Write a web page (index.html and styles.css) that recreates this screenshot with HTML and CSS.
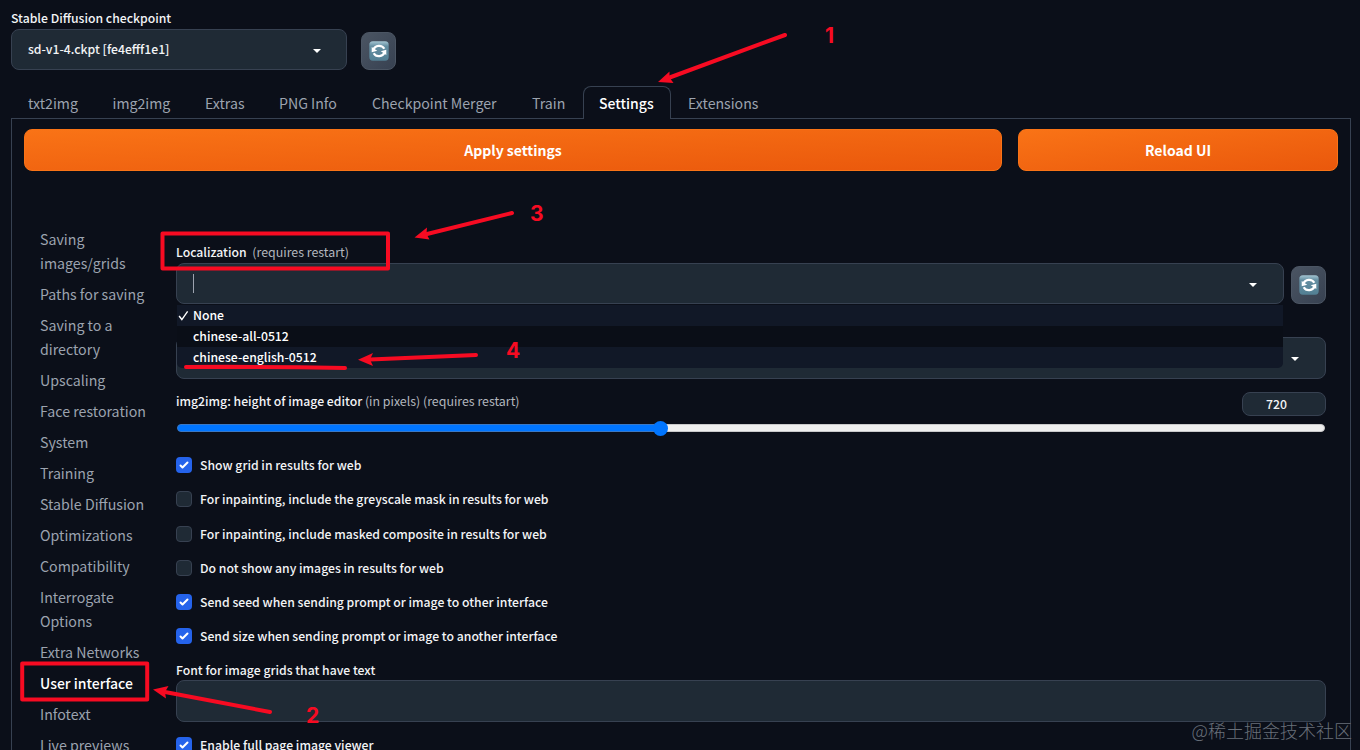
FILE: index.html
```html
<!DOCTYPE html>
<html lang="en">
<head>
<meta charset="utf-8">
<title>Stable Diffusion</title>
<link rel="stylesheet" href="styles.css">
</head>
<body>
<svg class="defs" width="0" height="0" aria-hidden="true">
  <defs>
    <linearGradient id="tile" x1="0" y1="0" x2="0" y2="1"><stop offset="0" stop-color="#a4c5d2"/><stop offset=".25" stop-color="#658fa2"/><stop offset="1" stop-color="#527f93"/></linearGradient>
    <symbol id="refresh" viewBox="0 0 20 20">
      <rect x=".3" y=".3" width="19.4" height="19.4" rx="3.6" fill="url(#tile)"/>
      <path d="M4.400 8.800A5.900 5.500 0 0 1 15.300 7.800M15.600 11.200A5.900 5.500 0 0 1 4.700 12.200" fill="none" stroke="#fff" stroke-width="2.200"/>
      <path d="M2.700 6V11.200L8.200 9.700ZM17.300 14V8.800L11.800 10.300Z" fill="#fff"/>
    </symbol>
    <symbol id="caret" viewBox="0 0 18 18"><path d="M5 8l4 4 4-4z" fill="#fff"/></symbol>
    <symbol id="check" viewBox="0 0 16 16"><path d="M12.207 4.793a1 1 0 0 1 0 1.414l-5 5a1 1 0 0 1-1.414 0l-2-2a1 1 0 0 1 1.414-1.414L6.5 9.086l4.293-4.293a1 1 0 0 1 1.414 0z" fill="#fff"/></symbol>
  </defs>
</svg>
<div class="app">
  <header class="quick">
    <div class="quick-field">
      <div class="label">Stable Diffusion checkpoint</div>
      <div class="select"><span class="value">sd-v1-4.ckpt [fe4efff1e1]</span><svg class="caret"><use href="#caret"/></svg></div>
    </div>
    <button class="tool"><svg><use href="#refresh"/></svg></button>
  </header>
  <nav class="tabs">
    <span class="tab t1">txt2img</span><span class="tab t2">img2img</span><span class="tab t3">Extras</span><span class="tab t4">PNG Info</span><span class="tab t5">Checkpoint Merger</span><span class="tab t6">Train</span><span class="tab t7 active">Settings</span><span class="tab t8">Extensions</span>
  </nav>
  <main class="panel">
    <div class="actions"><button class="primary apply">Apply settings</button><button class="primary reload">Reload UI</button></div>
    <div class="columns">
      <aside class="side">
        <div>Saving<br>images/grids</div><div>Paths for saving</div><div>Saving to a<br>directory</div><div>Upscaling</div><div>Face restoration</div><div>System</div><div>Training</div><div>Stable Diffusion</div><div>Optimizations</div><div>Compatibility</div><div>Interrogate<br>Options</div><div>Extra Networks</div><div class="current">User interface</div><div>Infotext</div><div>Live previews</div>
      </aside>
      <section class="form">
        <div class="label loc">Localization <span class="hint">(requires restart)</span></div>
        <div class="loc-row">
          <div class="select open"><span class="cursor"></span><svg class="caret"><use href="#caret"/></svg>
            <div class="menu">
              <div class="option"><svg class="tick" viewBox="0 0 12 12"><path d="M1.2 6.6L4.2 10.4L10.5 1.5" fill="none" stroke="#fff" stroke-width="1.5"/></svg>None</div>
              <div class="option alt">chinese-all-0512</div>
              <div class="option">chinese-english-0512</div>
            </div>
          </div>
          <button class="tool"><svg><use href="#refresh"/></svg></button>
        </div>
        <div class="select second"><svg class="caret"><use href="#caret"/></svg></div>
        <div class="range-head"><div class="label range-label">img2img: height of image editor <span class="hint">(in pixels) (requires restart)</span></div><div class="number">720</div></div>
        <div class="slider"><div class="fill"></div><div class="thumb"></div><div class="rest"></div></div>
        <div class="checks">
          <div class="check"><i class="box on"><svg><use href="#check"/></svg></i><span>Show grid in results for web</span></div>
          <div class="check"><i class="box"></i><span>For inpainting, include the greyscale mask in results for web</span></div>
          <div class="check"><i class="box"></i><span>For inpainting, include masked composite in results for web</span></div>
          <div class="check"><i class="box"></i><span>Do not show any images in results for web</span></div>
          <div class="check"><i class="box on"><svg><use href="#check"/></svg></i><span>Send seed when sending prompt or image to other interface</span></div>
          <div class="check"><i class="box on"><svg><use href="#check"/></svg></i><span>Send size when sending prompt or image to another interface</span></div>
        </div>
        <div class="label fontlabel">Font for image grids that have text</div>
        <div class="textbox"></div>
        <div class="check last"><i class="box on"><svg><use href="#check"/></svg></i><span>Enable full page image viewer</span></div>
      </section>
    </div>
  </main>
</div>
<svg class="marks" viewBox="0 0 1360 750">
  <g fill="none" stroke="#f70b22" stroke-width="4" stroke-linecap="round" stroke-linejoin="round">
    <path d="M785 35L667 78.500M512 213L425 234.500M476 355L370 359.500M270 712L165 692"/>
    <path d="M186 367Q265 366.500 345 368"/>
    <rect x="162.500" y="233.500" width="225.500" height="35"/>
    <rect x="22.200" y="663.500" width="125" height="36"/>
  </g>
  <g fill="#f70b22">
    <path d="M658 82L669.500 71.500L669.500 77.500L673.500 83Z"/>
    <path d="M414.500 237.500L427 227.500L426.500 234L429.500 239.500Z"/>
    <path d="M358 359.700L373 353L370 359.500L373 366Z"/>
    <path d="M153 689.500L168.500 686L165 692L166 698.500Z"/>
  </g>
  <g class="nums"><text x="825" y="43">1</text><text x="306" y="723">2</text><text x="530" y="221">3</text><text x="506" y="358">4</text></g>
</svg>
<div class="watermark">@稀土掘金技术社区</div>
</body>
</html>
```
FILE: styles.css
```css
* { box-sizing: border-box; }
body {
  margin: 0;
  width: 1360px;
  height: 750px;
  overflow: hidden;
  position: relative;
  background: #0b0f19;
  color: #f3f4f6;
  font: 500 12.23px/20px "Noto Sans CJK SC", "Noto Sans", sans-serif;
}
button { font: inherit; color: #fff; padding: 0; }
.defs { position: absolute; }
.app { padding: 8px 9px 0 11px; }
.label { height: 21px; white-space: nowrap; }
.hint { color: #b3b7be; font-size: 12.4px; font-weight: 400; }
.quick { display: flex; align-items: flex-end; gap: 14px; }
.quick-field { width: 336px; }
.select {
  display: flex;
  align-items: center;
  justify-content: space-between;
  height: 41px;
  padding: 0 20px 0 16px;
  background: #1f2a35;
  border: 1px solid #374151;
  border-radius: 8px;
}
.value { padding-bottom: 2px; }
.caret { width: 18px; height: 18px; }
.tool {
  display: flex;
  align-items: center;
  justify-content: center;
  width: 35px;
  height: 38px;
  border: 1px solid #4b5563;
  border-radius: 8px;
  background: linear-gradient(to bottom right, #4b5563, #374151);
}
.tool svg { width: 20px; height: 20px; }
.tabs { display: flex; height: 33px; margin-top: 16px; position: relative; z-index: 1; }
.tab {
  height: 33px;
  padding-left: 16px;
  border: 1px solid transparent;
  border-bottom: 0;
  color: #9ca3af;
  font-size: 14.15px;
  font-weight: 400;
  line-height: 32px;
  white-space: nowrap;
}
.t1 { width: 84.5px; } .t2 { width: 92.5px; } .t3 { width: 74px; } .t4 { width: 93px; }
.t5 { width: 160px; } .t6 { width: 68px; } .t7 { width: 88px; }
.tab.active {
  padding-left: 15px;
  color: #fff;
  font-size: 14px;
  font-weight: 500;
  background: #0b0f19;
  border-color: #374151;
  border-radius: 8px 8px 0 0;
}
.panel {
  width: 1340px;
  height: 660px;
  margin-top: -1px;
  padding: 10px 12px;
  border: 1px solid #374151;
}
.actions { display: flex; gap: 16px; }
.primary {
  height: 42px;
  border: 1px solid #f97316;
  border-radius: 8px;
  background: linear-gradient(to bottom right, #f97316, #ea580c);
  font-size: 14px;
  font-weight: 700;
}
.apply { width: 978px; }
.reload { width: 320px; }
.columns { display: flex; }
.side {
  width: 152px;
  padding: 53px 0 0 16px;
  color: #9ca3af;
  font-size: 14.2px;
  font-weight: 400;
  line-height: 24px;
  white-space: nowrap;
}
.side div { padding: 3px 0 4px; }
.side .current { color: #fff; font-size: 14px; font-weight: 500; }
.form { width: 1150px; padding-top: 71px; }
.loc { white-space: pre; }
.loc .hint { margin-left: 3px; }
.loc-row { display: flex; align-items: flex-end; gap: 7px; }
.open { position: relative; width: 1108px; padding-right: 21px; }
.cursor { width: 1px; height: 19px; background: #9ca3af; }
.menu { position: absolute; left: 0; top: 41px; width: 1106px; z-index: 2; border-radius: 0 0 5px 5px; overflow: hidden; }
.option { position: relative; height: 21px; padding-left: 16px; line-height: 21px; background: #111827; color: #fff; }
.alt { background: #0a0e17; }
.tick { position: absolute; left: 1px; top: 5px; width: 11px; height: 11px; }
.second { height: 42px; margin-top: 33px; padding-right: 21px; justify-content: flex-end; }
.range-head { display: flex; justify-content: space-between; margin-top: 13px; }
.range-label { line-height: 18px; }
.number { width: 84px; height: 24px; padding-left: 23px; line-height: 22px; background: #1f2a35; border: 1px solid #374151; border-radius: 8px; }
.slider { display: flex; align-items: center; height: 16px; margin: 4px 1px 0; }
.fill { width: 478px; height: 8px; background: #0075ff; border: 1px solid #3b78c4; border-radius: 4px 0 0 4px; }
.thumb { width: 15px; height: 15px; margin: 0 -2px; border-radius: 50%; background: #0075ff; z-index: 1; }
.rest { flex: 1; height: 8px; background: #efefef; border: 1px solid #c9c9ca; border-radius: 0 4px 4px 0; }
.checks { display: flex; flex-direction: column; gap: 14.3px; margin-top: 19px; }
.check { display: flex; align-items: center; gap: 8px; height: 20px; white-space: nowrap; }
.box { width: 16px; height: 16px; border-radius: 4px; border: 1px solid #374151; background: #1f2a35; }
.box.on { border: 0; background: #2563eb; }
.box svg { display: block; width: 16px; height: 16px; }
.fontlabel { margin-top: 13.5px; height: 20.5px; line-height: 21px; }
.textbox { height: 42px; background: #1f2a35; border: 1px solid #374151; border-radius: 8px; }
.last { margin-top: 13px; }
.marks { position: absolute; left: 0; top: 0; width: 1360px; height: 750px; z-index: 5; }
.nums { fill: #f70b22; font: 700 21px Inter, sans-serif; }
.watermark {
  position: absolute;
  right: 8px;
  bottom: 8px;
  z-index: 6;
  color: #697079;
  font: 300 18px/24px "Noto Sans CJK SC", sans-serif;
  white-space: nowrap;
}
```
